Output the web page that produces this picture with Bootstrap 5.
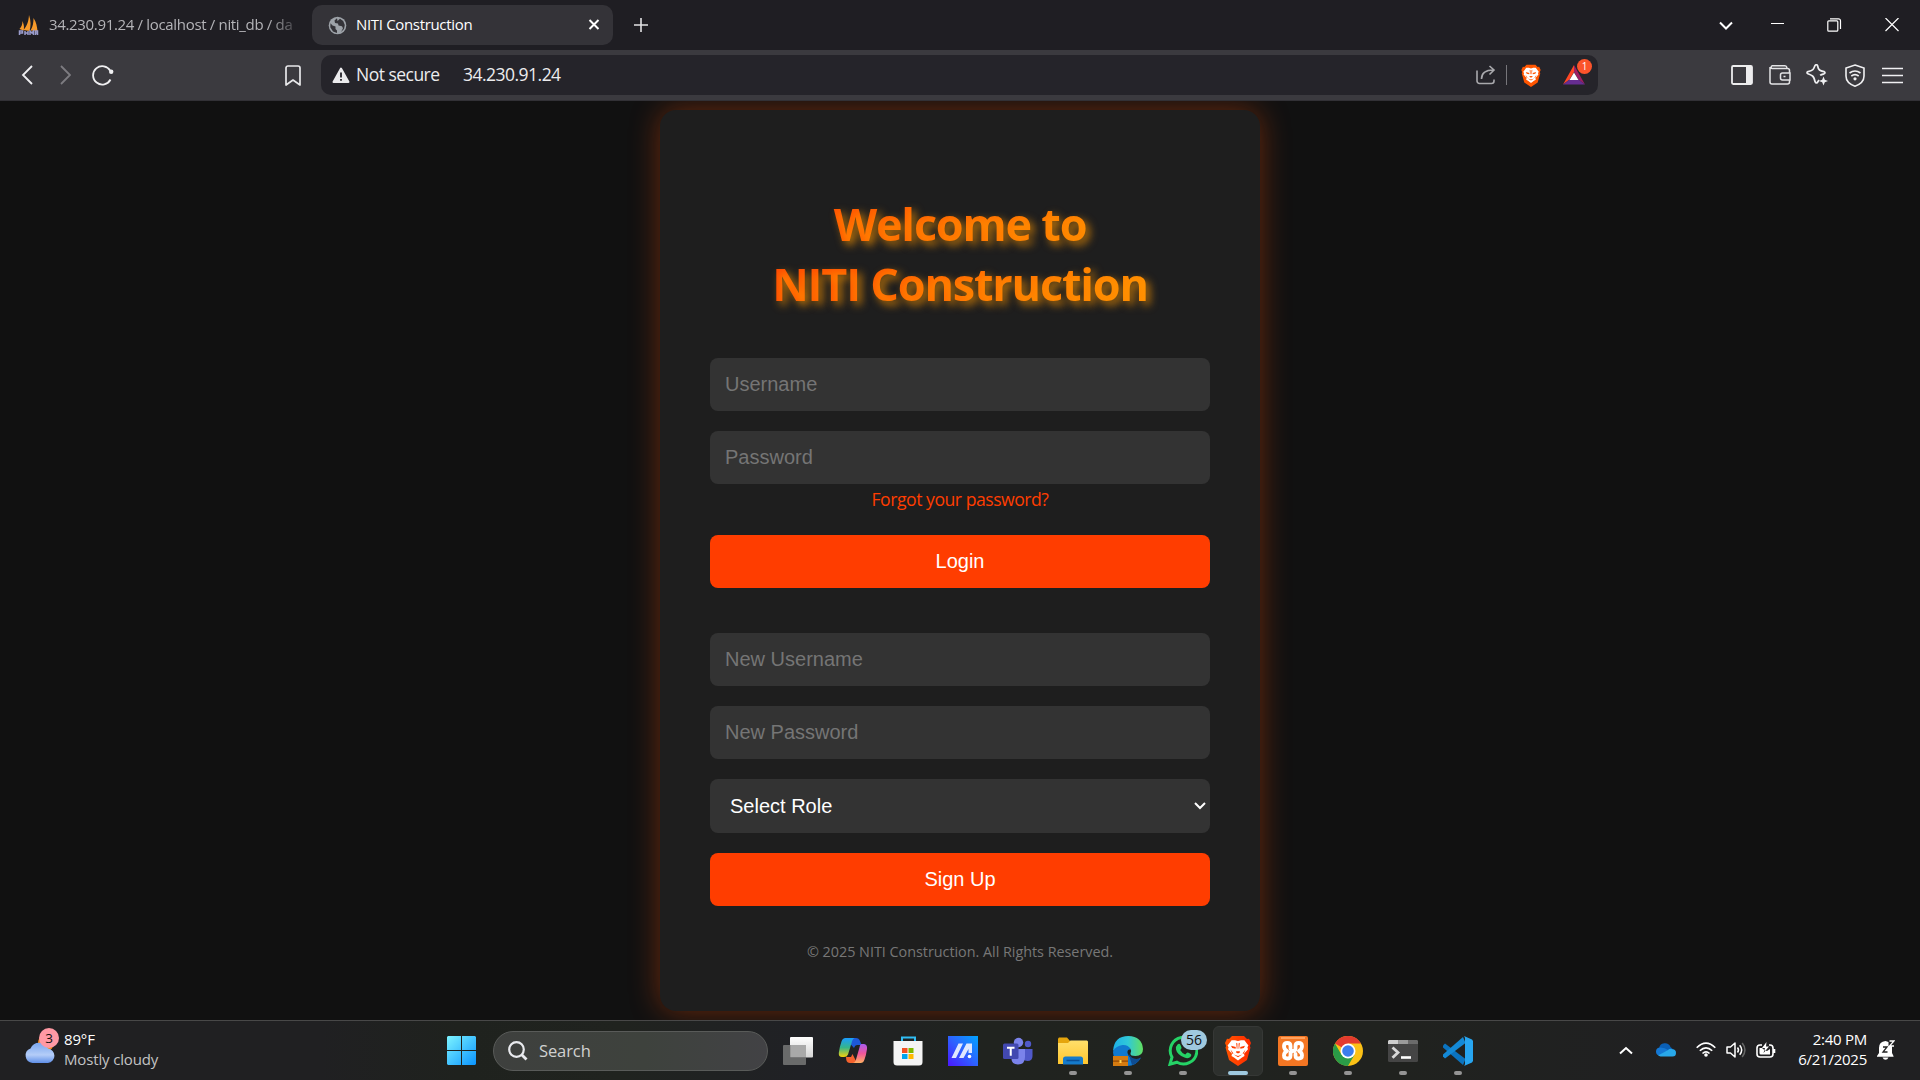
<!DOCTYPE html>
<html lang="en">
<head>
<meta charset="utf-8">
<title>NITI Construction</title>
<link rel="stylesheet" href="https://cdn.jsdelivr.net/npm/bootstrap@5.3.0/dist/css/bootstrap.min.css">
<style>
html,body{height:100%}
body{background:#111;color:#fff;font-family:"Open Sans","Noto Sans",sans-serif;overflow:hidden}
svg{display:block;flex:none}
.ui-text{white-space:nowrap;line-height:1}
.tabstrip{height:50px;background:#1f1e23}
.tab-old{width:312px;padding-left:18px}
.tab-title{font-size:15px;letter-spacing:-.33px;line-height:20px;padding-bottom:2px}
.tab-old .tab-title{width:244px;margin-left:10px;overflow:hidden;color:#b4b4b8;-webkit-mask-image:linear-gradient(90deg,#000 90%,rgba(0,0,0,.3));mask-image:linear-gradient(90deg,#000 90%,rgba(0,0,0,.3))}
.tab-current{width:301px;height:40px;margin-top:5px;border-radius:10px;background:#343338;padding:0 13px 0 16px}
.tab-current .tab-title{margin-left:9px}
.new-tab{padding-left:21px}
.win-btn{width:57px}
.win-list{width:46px}
.toolbar{height:51px;background:#3b3a3f;border-bottom:1px solid #323136}
.nav-part{width:321px;padding:0 20px 0 21px}
.address{width:1277px;height:40px;border-radius:10px;background:#25242a;padding:0 13px 0 11px}
.address-text{font-size:17.5px;color:#ececee;letter-spacing:-.52px}
.insecure{margin-left:6px;width:107px}
.addr-sep{width:1px;height:20px;background:#77767b;margin:0 14px 0 10px}
.reward{width:22px;height:20px;margin-left:22px}
.reward-count{left:14px;top:-6px;width:15px;height:15px;background:#fb542b;font-size:10px;line-height:15px}
.tool-right{padding-right:9px}
.tool-btn{width:37.5px}
.page-area{padding-top:9px;overflow:hidden}
.login-box{width:600px;height:901px;border-radius:16px;background:#1e1e1e;padding:84px 50px 0;box-shadow:0 0 30px rgba(255,80,0,.38)}
.welcome{font-size:45px;line-height:60px;font-weight:700;letter-spacing:-1.2px;margin-bottom:44px;background:linear-gradient(90deg,#ff3d00,#ff9800);-webkit-background-clip:text;background-clip:text;color:transparent;text-shadow:4px 4px 8px rgba(255,152,0,.7)}
.field,.field:focus{height:53px;border:0;border-radius:8px;background:#333;color:#fff;font:20px "Liberation Sans",Arial,sans-serif;padding:0 15px;margin-bottom:20px}
.field::placeholder{color:#757575;opacity:1}
.field.role{height:54px;padding:0 4px 0 20px}
.btn-fire{height:53px;border:0;border-radius:8px;background:#ff3d00;color:#fff;font:20px "Liberation Sans",Arial,sans-serif;padding:0}
.btn-fire:hover{background:#ff3d00;color:#fff}
.password{margin-bottom:3px}
.forgot{color:#ff3d00;font-size:17.6px;letter-spacing:-.47px;line-height:24px;margin-bottom:24px}
.signup{margin-top:45px}
.rights{color:#777;font-size:14.4px;letter-spacing:-.03px;line-height:20px;margin-top:36px}
.taskbar{height:60px;border-top:1px solid #484848;background:linear-gradient(90deg,#202022 0,#202022 320px,#1f221e 460px,#20231f 620px,#202125 800px,#20231f 980px,#20221f 1400px,#202022 1700px)}
.weather{width:436px;padding-left:24px}
.weather-art{width:32px;height:36px;margin-top:-10px}
.weather-count{left:15px;top:0;width:20px;height:20px;background:#ff99a4;color:#111;font-size:13.5px;line-height:20px}
.weather-text{font-size:15px;letter-spacing:-.15px;line-height:20px;margin:-4px 0 0 8px;color:#c3c3c4}
.task{width:50px;height:50px}
.task.current{border:1px solid #363836;border-radius:6px;background:#2d302d}
.task.running::after{content:"";position:absolute;left:21px;bottom:1px;width:8px;height:4px;border-radius:2px;background:#949494}
.task.current::after{left:14px;bottom:0;width:20px;background:#9fc9df}
.task-list{gap:5px}
.search{width:275px;height:40px;margin:0 5px 0 7px;border:1px solid #595b59;border-radius:20px;background:linear-gradient(90deg,#3e403e,#3e423d 55%,#424245);padding-left:14px;color:#d0d1d0;font-size:16.5px}
.search .ui-text{margin-left:11px;padding-top:1px;letter-spacing:-.1px}
.chat-count{left:23px;top:4px;width:26px;height:20px;background:#9fc9df;color:#111;font-size:14px;line-height:20px}
.tray{margin-left:auto;padding-right:25px}
.tray-wide{width:40px}
.tray-slim{width:30px}
.clock{width:80px;font-size:15px;letter-spacing:-.25px;line-height:20px;margin:-4px 10px 0 1px}
</style>
<script src="https://cdn.jsdelivr.net/npm/bootstrap@5.3.0/dist/js/bootstrap.bundle.min.js"></script>
</head>
<body class="d-flex flex-column">
<svg width="0" height="0" class="position-absolute"><defs>
<linearGradient id="flame" x1="0" x2="1"><stop stop-color="#ff5500"/><stop offset="1" stop-color="#ff2a00"/></linearGradient>
<symbol id="lion" viewBox="0 0 26 31"><path d="M7 1h12l3 3 2-.3L26 8l-1.200 3 .7 1.500-3.500 12.500L13 31l-9-6L.5 12.500 1.200 11 0 8l2-4.300 2 .3z"/><path fill="#fff" d="M13 6l3-.8h3.400l4 5.300-1 1.800.6 2-4 4.500.5 2.300-2.500 1.500-4 3-4-3-2.500-1.500.500-2.300-4-4.500.6-2-1-1.800 4-5.300H10z"/><path fill="currentColor" d="M6 10.800l4.800 1.300-.2 1.600-3.400-.6zM20 10.800l-4.800 1.300.2 1.600 3.400-.6zM10.800 17.200L13 18.500l2.200-1.300-.6-1h-3.200zM11.200 7.700l.6 6h.6V8.400zM14.800 7.700l-.6 6h-.6V8.400zM8.700 19.500L13 21l4.300-1.500L13 22.200zM5.500 14.500l3 4-1.300.2zM20.500 14.500l-3 4 1.300.2z"/></symbol>
</defs></svg>

<header class="tabstrip d-flex flex-shrink-0">
  <div class="tab-old d-flex align-items-center">
    <svg width="21" height="21" viewBox="0 0 21 21"><path fill="#f79a2a" d="M4.500 6C6 10 6.500 13 5.500 15.500L1.500 14C3.500 12 4.500 9 4.500 6zM11 0c2 6 2 11 .5 16L5.500 15C9.500 10.500 10.500 6 11 0zM15.500 3c3 4 3.500 9 4 13l-7-.5c2.500-4 3-8 3-12.500z"/><path fill="none" stroke="#9a9ccb" stroke-width="1.500" d="M1.500 20v-4h3v2h-3M7 20v-4m0 2h3m0-2v4M12 20v-4l2 2 1.500-2v4M17.500 20v-4h2v4m-2-2h2"/></svg>
    <span class="tab-title ui-text">34.230.91.24 / localhost / niti_db / da</span>
  </div>
  <div class="tab-current d-flex align-items-center">
    <svg width="19" height="19" viewBox="0 0 19 19"><circle cx="9.500" cy="9.500" r="8.800" fill="#9da2a8"/><path fill="#343338" d="M9 2.200L6.500 4.500 7 7l3 .5.5 2 3.500.7 1 2-2 3.800 3-3 .8-4-1.600-4L12 2.700 9.500 5zM2.500 7.200l-.2 4L5 15.500l4 1.500V14.500L7.500 13V10.500L4.500 9.500z"/></svg>
    <span class="tab-title ui-text me-auto">NITI Construction</span>
    <svg width="12" height="12" viewBox="0 0 12 12" stroke="#fff" stroke-width="2"><path d="M1.500 1l9 9m0-9l-9 9"/></svg>
  </div>
  <div class="new-tab d-flex align-items-center me-auto"><svg width="14" height="14" viewBox="0 0 14 14" stroke="#e2e2e4" stroke-width="1.600"><path d="M7 0v14M0 7h14"/></svg></div>
  <div class="win-list d-flex align-items-center justify-content-center"><svg width="14" height="9" viewBox="0 0 14 9" fill="none" stroke="#fff" stroke-width="2"><path d="M1 1.500l6 6 6-6"/></svg></div>
  <div class="win-btn d-flex align-items-center justify-content-center"><svg width="13" height="4" viewBox="0 0 13 4"><path stroke="#fff" d="M0 .5h13"/></svg></div>
  <div class="win-btn d-flex align-items-center justify-content-center"><svg width="15" height="14" viewBox="0 0 15 14" fill="none" stroke="#fff" stroke-width="1.200"><rect x=".8" y="2.800" width="10" height="10.400" rx="1"/><path d="M3 .8h8.500a2 2 0 0 1 2 2V11"/></svg></div>
  <div class="win-btn d-flex align-items-center justify-content-center"><svg width="14" height="14" viewBox="0 0 14 14" stroke="#fff" stroke-width="1.200"><path d="M.5 0l13 13m0-13l-13 13"/></svg></div>
</header>

<nav class="toolbar d-flex align-items-center flex-shrink-0">
  <div class="nav-part d-flex align-items-center">
    <svg width="12" height="20" viewBox="0 0 12 20" fill="none" stroke="#f0f0f2" stroke-width="1.800"><path d="M11 1L2 10l9 9"/></svg>
    <svg class="ms-4" width="14" height="20" viewBox="-3 0 14 20" fill="none" stroke="#7d7c81" stroke-width="1.800"><path d="M1 1l9 9-9 9"/></svg>
    <svg class="ms-3 me-auto" width="27" height="22" viewBox="-5 0 27 22" fill="none" stroke="#f0f0f2" stroke-width="1.800"><path d="M18.500 15.500A9.200 9.200 0 1 1 18.300 6.800"/><circle cx="19.200" cy="7.800" r="2.200" fill="#f0f0f2" stroke="none"/></svg>
    <svg width="16" height="21" viewBox="0 0 16 21" fill="none" stroke="#e8e8ea" stroke-width="1.700"><path stroke-linejoin="round" d="M1 20V3a2 2 0 0 1 2-2h10a2 2 0 0 1 2 2v17l-7-5z"/></svg>
  </div>
  <div class="address d-flex align-items-center">
    <svg width="18" height="16" viewBox="0 0 18 16"><path fill="#ebebed" stroke="#ebebed" stroke-width="2" stroke-linejoin="round" d="M9 1.500L16.500 15h-15z"/><path stroke="#25242a" stroke-width="1.800" d="M9 5.500v5M9 12v1.800"/></svg>
    <span class="address-text ui-text insecure">Not secure</span>
    <span class="address-text ui-text me-auto">34.230.91.24</span>
    <svg width="20" height="20" viewBox="0 0 20 20" fill="none" stroke="#a9a9ad" stroke-width="1.600"><path d="M1 5.500V16a2.500 2.500 0 0 0 2.500 2.500h12A2.500 2.500 0 0 0 18 16v-1.500M5.500 14c0-6 4-9 12-9M13.500 1l4.500 4-4.500 4.500"/></svg>
    <span class="addr-sep"></span>
    <svg width="20" height="23" fill="#ff5500" color="#ff5500"><use href="#lion"/></svg>
    <div class="reward position-relative">
      <svg width="22" height="20" viewBox="0 0 22 20"><path fill="#ff4724" d="M11 0v7L6.500 14.500 0 19.500z"/><path fill="#9e1f63" d="M11 0l11 19.500-6.500-5L11 7z"/><path fill="#662d91" d="M0 19.500l6.500-5h9l6.500 5z"/><path fill="#fff" d="M11 7.500l4.500 7.500h-9z"/></svg>
      <span class="reward-count position-absolute rounded-circle text-center">1</span>
    </div>
  </div>
  <div class="tool-right d-flex ms-auto">
    <div class="tool-btn d-flex align-items-center justify-content-center"><svg width="22" height="20" viewBox="0 0 22 20"><rect x="1" y="1" width="20" height="18" rx="1.200" fill="none" stroke="#ededee" stroke-width="1.800"/><path fill="#ededee" d="M15 1h6v18h-6z"/></svg></div>
    <div class="tool-btn d-flex align-items-center justify-content-center"><svg width="22" height="20" viewBox="0 0 22 20" fill="none" stroke="#e4e4e6" stroke-width="1.500"><path d="M20.500 8V5.500a2 2 0 0 0-2-2H3a1.500 1.500 0 0 1 0-2.700h13q1.500 0 2 2M1 2v15a2 2 0 0 0 2 2h15.500a2 2 0 0 0 2-2V15M21 8h-7.500q-2 0-2 2v3q0 2 2 2H21zM14.500 11.500h2"/></svg></div>
    <div class="tool-btn d-flex align-items-center justify-content-center"><svg width="22" height="22" viewBox="0 0 22 22" fill="none" stroke="#f0f0f2" stroke-width="1.700" stroke-linejoin="round"><path d="M13 16l-1 1.500q-1.500 3-3 0-1-4.500-2.500-5.500T2 9.800q-2-1.200 0-2.200 4-.7 5-2T9 1.500q1.500-1.500 2.500 0 .7 3.500 2 4.500t4.500 1.600q2 1.200 0 2.200-3 .7-3.800 1.500"/><path fill="#f0f0f2" stroke="none" d="M17.500 12.500l1.300 3.200 3.200 1.300-3.200 1.300-1.300 3.200-1.300-3.200L13 17l3.200-1.300z"/></svg></div>
    <div class="tool-btn d-flex align-items-center justify-content-center"><svg width="20" height="23" viewBox="0 0 20 23" fill="none" stroke="#f0f0f2" stroke-width="1.600"><path d="M10 1l9 3v8q0 7-9 10.200Q1 19 1 12V4z"/><path d="M4.500 9q5.500-4 11 0M6.300 12q3.700-2.700 7.400 0"/><circle cx="10" cy="14.800" r="1.600" fill="#f0f0f2" stroke="none"/></svg></div>
    <div class="tool-btn d-flex align-items-center justify-content-center"><svg width="21" height="17" viewBox="0 0 21 17"><path stroke="#f0f0f2" stroke-width="1.700" d="M0 1.500h21M0 8.500h21M0 15.500h21"/></svg></div>
  </div>
</nav>

<main class="page-area flex-grow-1 d-flex justify-content-center align-items-start">
  <div class="login-box text-center flex-shrink-0">
    <h1 class="welcome">Welcome to<br>NITI Construction</h1>
    <form>
      <input class="form-control field" placeholder="Username">
      <input class="form-control field password" type="password" placeholder="Password">
      <div class="forgot">Forgot your password?</div>
      <button type="button" class="btn btn-fire w-100 d-block">Login</button>
    </form>
    <form class="signup">
      <input class="form-control field" placeholder="New Username">
      <input class="form-control field" type="password" placeholder="New Password">
      <div class="field role d-flex align-items-center justify-content-between"><span>Select Role</span><svg width="12" height="8" viewBox="0 0 12 8" fill="none" stroke="#fff" stroke-width="2"><path d="M1 1l5 5 5-5"/></svg></div>
      <button type="button" class="btn btn-fire w-100 d-block">Sign Up</button>
    </form>
    <div class="rights">© 2025 NITI Construction. All Rights Reserved.</div>
  </div>
</main>

<footer class="taskbar d-flex align-items-center flex-shrink-0">
  <div class="weather d-flex align-items-center">
    <div class="weather-art position-relative">
      <svg width="32" height="36" viewBox="0 0 32 36"><defs><linearGradient id="cloud" x2="0" y2="1"><stop stop-color="#7ba6ee"/><stop offset=".6" stop-color="#b4cdf8"/><stop offset="1" stop-color="#5f8fe8"/></linearGradient></defs><circle cx="22" cy="15" r="8" fill="#f78a1c"/><path fill="url(#cloud)" d="M8.500 35a7.500 7.500 0 0 1-2-14.500A9.500 9.500 0 0 1 24 20.500 7.300 7.300 0 0 1 24 35z"/></svg>
      <span class="weather-count position-absolute rounded-circle text-center">3</span>
    </div>
    <div class="weather-text"><div class="text-white">89°F</div><div>Mostly cloudy</div></div>
  </div>
  <div class="task d-flex align-items-center justify-content-center"><svg width="30" height="30" viewBox="0 0 30 30"><defs><linearGradient id="win" x2="1" y2="1"><stop stop-color="#7df4ff"/><stop offset="1" stop-color="#0a94ff"/></linearGradient></defs><path fill="url(#win)" d="M2 0h13v14H1V1zM16 0h13l1 1v13H16zM1 15h14v14H2l-1-1zM16 15h14v13l-1 1H16z"/></svg></div>
  <div class="search d-flex align-items-center rounded-pill"><svg width="20" height="20" viewBox="0 0 20 20" fill="none" stroke="#e9eaee" stroke-width="2.200"><circle cx="8.500" cy="8.500" r="7.300"/><path stroke-width="2.800" d="M13.500 13.500l5 5"/></svg><span class="ui-text">Search</span></div>
  <div class="task-list d-flex">
    <div class="task d-flex align-items-center justify-content-center"><svg width="30" height="28" viewBox="0 0 30 28"><defs><linearGradient id="pane" x2="0" y2="1"><stop stop-color="#fff"/><stop offset="1" stop-color="#d5d5d5"/></linearGradient></defs><rect x="7" width="23" height="20.500" rx="1" fill="url(#pane)"/><rect y="8" width="23" height="20" rx="1" fill="#777" opacity=".85"/><path fill="#a9a9a9" d="M7.500 8H23v12H7.500z"/></svg></div>
    <div class="task d-flex align-items-center justify-content-center"><svg width="30" height="28" viewBox="0 0 30 28"><defs><linearGradient id="cpA" x2="0" y2="1"><stop stop-color="#1a9cff"/><stop offset=".5" stop-color="#35b58a"/><stop offset="1" stop-color="#f6d30c"/></linearGradient><linearGradient id="cpB" x2="0" y2="1"><stop stop-color="#a95cf0"/><stop offset=".5" stop-color="#f0569a"/><stop offset="1" stop-color="#ffb061"/></linearGradient></defs><path fill="#1d58d8" d="M7 1h11q3 0 4 3l1.500 4H19q-2 0-3 3z"/><path fill="#f4622e" d="M8 20h5l1.500-3L19 26h-7q-3 0-3.700-3z"/><path fill="url(#cpA)" d="M7.500 1H17q-2 0-3 3.500l-4 13Q9 20 6 20H4q-3.500 0-3.200-4Q1.500 10 3.500 4.500 4.500 1 7.500 1z"/><path fill="url(#cpB)" d="M23.500 7H26q3.500.5 3 5-.8 6-2.500 10.500-1 3.500-4 3.500h-8q2.500 0 3.500-3.500l3.500-12Q22 7 23.500 7z"/></svg></div>
    <div class="task d-flex align-items-center justify-content-center"><svg width="30" height="30" viewBox="0 0 30 30"><path fill="none" stroke="#30bdf3" stroke-width="2" d="M9 6V1.500h13V6"/><path fill="#f4f4f4" d="M.5 5h29v21q0 3.500-3.500 3.500H4Q.5 29.500.5 26z"/><path fill="#f25022" d="M9 12h5.500v5H9z"/><path fill="#7fba00" d="M15.500 12h5v5h-5z"/><path fill="#00a4ef" d="M9 18h5.500v5H9z"/><path fill="#ffb900" d="M15.500 18h5v5h-5z"/></svg></div>
    <div class="task d-flex align-items-center justify-content-center"><svg width="30" height="30" viewBox="0 0 30 30"><defs><linearGradient id="asus" x1="0" y1="1" x2="1" y2="0"><stop stop-color="#4b16ff"/><stop offset=".5" stop-color="#2d62ff"/><stop offset="1" stop-color="#00a5ff"/></linearGradient></defs><path fill="url(#asus)" d="M0 0h30v30H0z"/><path fill="#dfe8ff" d="M10.500 7.500H15L8 22H3.500zM18.500 7.500H24V17h-3.500v-4L15.500 22H11z"/><circle cx="21.500" cy="20.500" r="1.800" fill="#fff"/></svg></div>
    <div class="task d-flex align-items-center justify-content-center"><svg width="30" height="28" viewBox="0 0 30 28"><circle cx="15.500" cy="5.500" r="4.700" fill="#7b83eb"/><circle cx="25" cy="7" r="3.200" fill="#5059c9"/><path fill="#5059c9" d="M20 12h9.500v7q0 5-5 5-3 0-4.500-2z"/><path fill="#7b83eb" d="M8.500 12H22v8q0 7.500-7 7.500T8.500 21z"/><rect y="6.500" width="15.500" height="15.500" rx="1.500" fill="#4248b0"/><path stroke="#fff" stroke-width="2" d="M4 10.700h7.500M7.750 10.700v8"/></svg></div>
    <div class="task running position-relative d-flex align-items-center justify-content-center"><svg width="30" height="28" viewBox="0 0 30 28"><defs><linearGradient id="fold" x2="0" y2="1"><stop stop-color="#ffdf6b"/><stop offset="1" stop-color="#ffc62e"/></linearGradient></defs><path fill="#e5a50d" d="M1 0.500h8l3 3.500v5H0V1.500z"/><path fill="url(#fold)" d="M0 6h10l2.500-2.500H29l1 1V27H0z"/><path fill="#157bcb" d="M5 27.500V22q0-2.500 2.500-2.500h15q2.500 0 2.500 2.500v5.500z"/><path stroke="#0a4f97" stroke-width="1.500" d="M8.500 23.500h13"/></svg></div>
    <div class="task running position-relative d-flex align-items-center justify-content-center"><svg width="30" height="30" viewBox="0 0 30 30"><defs><linearGradient id="wave" x2="1"><stop stop-color="#1db0e8"/><stop offset=".5" stop-color="#30c8d8"/><stop offset="1" stop-color="#62e060"/></linearGradient></defs><path fill="#1179cf" d="M0 16Q2 8 10 8q7 0 7.500 5.500Q14 13 14.500 17q1.500 6 9 6 2.500 0 4.500-1.500Q23.500 30 14 30 1 29 0 16z"/><path fill="url(#wave)" d="M0 15Q1 0 15.500 0 29 0.500 30 13q0 7-7.500 7-5.500 0-5-2.500 1.500-2 0-4.500Q15 8.500 9.500 9 3 10 0 15z"/><path fill="#0e4d93" d="M15.500 17.500q3 5.500 8 5.500 2.500 0 4.500-1.500Q25 27.500 19 29z"/><path fill="#d57b10" d="M0 20h15v10H0z"/><path fill="#8f4605" d="M0 24.500h15v1.200H0z"/><path fill="#ffd34f" d="M6.500 24h2v3h-2z"/></svg></div>
    <div class="task running position-relative d-flex align-items-center justify-content-center"><svg width="30" height="30" viewBox="0 0 30 30"><path fill="none" stroke="#25d366" stroke-width="3" d="M2 28.200l2-7A13.300 13.300 0 1 1 9 26.200z"/><path fill="#25d366" d="M9.500 8.500q2-1.500 3 .5l1 2.500q.2 1-1.300 2.500 2 3.500 5 4.500l1.800-1.700q.8-.5 1.500 0l2.300 1.200q1.200.8 0 2.500-2.300 2.700-6.300 1Q9 18.500 8 13.500q-.3-3.500 1.500-5z"/></svg><span class="chat-count position-absolute rounded-pill text-center">56</span></div>
    <div class="task running current position-relative d-flex align-items-center justify-content-center"><svg width="26" height="31" fill="url(#flame)" color="#ff3d00"><use href="#lion"/></svg></div>
    <div class="task running position-relative d-flex align-items-center justify-content-center"><svg width="30" height="30" viewBox="0 0 30 30"><rect width="30" height="30" rx="2" fill="#f37623"/><path fill="#ffa25e" d="M3 1h24v2H3z"/><path fill="none" stroke="#fff" stroke-width="3.800" stroke-linejoin="round" stroke-linecap="round" d="M12.500 12.500V10q0-3-3.200-3T6 10q0 3.500 3 5-3 1.500-3 4.500T9.300 22.500t3.200-3V17.500q0-2.500 2.500-2.500t2.500-2.500V10q0-3 3.200-3T24 10q0 3.500-3 5 3 1.500 3 4.500t-3.300 3-3.200-3V18"/></svg></div>
    <div class="task running position-relative d-flex align-items-center justify-content-center"><svg width="30" height="30" viewBox="0 0 30 30"><circle cx="15" cy="15" r="15" fill="#fbc116"/><path fill="#e33b2e" d="M15 15L2 7.500A15 15 0 0 1 28 7.500H15z"/><path fill="#2a9b47" d="M2 7.500A15 15 0 0 0 15 30l6.500-11.200L15 15 8.500 18.800z"/><circle cx="15" cy="15" r="7.500" fill="#fff"/><circle cx="15" cy="15" r="5.800" fill="#3b7ded"/></svg></div>
    <div class="task running position-relative d-flex align-items-center justify-content-center"><svg width="30" height="22" viewBox="0 0 30 22"><rect width="30" height="22" rx="1.500" fill="#454545"/><path fill="#cfcfcf" d="M1 0h9.500v4H0V1z"/><path fill="#9b9b9b" d="M10.500 0H20v4h-9.500z"/><path fill="#6b6b6b" d="M20 0h9l1 1v3H20z"/><path fill="none" stroke="#d8d8d8" stroke-width="2.800" d="M4.500 7.500l5.500 5-5.500 5.300"/><path stroke="#fff" stroke-width="2.600" d="M13 17.500h10"/></svg></div>
    <div class="task running position-relative d-flex align-items-center justify-content-center"><svg width="30" height="30" viewBox="0 0 30 30"><path fill="#0b73bf" d="M2 7.500L0 9.500v2L20 29l2.500-6z"/><path fill="#1489d6" d="M2 22.500l-2-2v-2L20 1l2.500 6z"/><path fill="#27a5f0" d="M21 0l8 3.500 1 1.500v20l-1 1.500L21 30q1-1 1-2.500v-25Q22 1 21 0z"/></svg></div>
  </div>
  <div class="tray d-flex align-items-center">
    <div class="tray-wide d-flex justify-content-center"><svg width="14" height="10" viewBox="0 0 14 10" fill="none" stroke="#fff" stroke-width="2"><path d="M1 7.500L7 2l6 5.500"/></svg></div>
    <div class="tray-wide d-flex justify-content-center"><svg width="20" height="16" viewBox="0 0 20 16"><path fill="#0a5fb5" d="M3 5.500A6 6 0 0 1 14.500 4L20 9l-7 3z"/><path fill="#1478d4" d="M4.500 4.500Q9 4.500 12 7L4 12.500Q0 12.500 0 8.500t4.500-4z"/><path fill="#28a8ea" d="M2 12.500L12 7q2-2 4.500-.8Q20 6.500 20 10q0 3.500-3.500 3.500h-12z"/></svg></div>
    <div class="tray-wide d-flex justify-content-center"><svg width="20" height="17" viewBox="0 0 20 17" fill="none" stroke="#fff" stroke-width="1.600"><path d="M.7 5.800Q10-3.500 19.300 5.800M3.800 8.800q6.200-6 12.400 0M6.500 11.500q3.500-3.300 7 0"/><circle cx="10" cy="13" r="1.800" fill="#fff" stroke="none"/></svg></div>
    <div class="tray-slim"><svg width="21" height="20" viewBox="0 0 21 20" fill="none" stroke="#fff" stroke-width="1.500"><path stroke-linejoin="round" d="M1 6h3.500L9 2v14l-4.500-4H1z"/><path d="M11.500 6.500q2 2.500 0 5M13.700 4.300q4 4.700 0 9.400"/><path stroke="#666" d="M16.200 2q5.500 7 0 14"/></svg></div>
    <div class="tray-slim"><svg width="20" height="20" viewBox="0 0 20 20" fill="none" stroke="#fff" stroke-width="1.600"><path d="M6 4H4Q1 4 1 7v6q0 3 3 3h10q3 0 3-3V7q0-3-3-3h-1M18.500 8v4"/><path fill="#fff" stroke="none" d="M3.500 7H6q2 2.500 5 3l3-2v5.500H5q-1.500 0-1.500-1.500zM10.500 1L6 7h3l-1.500 5L13 5.500h-3z"/></svg></div>
    <div class="clock text-end"><div>2:40 PM</div><div>6/21/2025</div></div>
    <svg width="18" height="21" viewBox="0 0 18 21"><path fill="#fff" d="M2 8q0-6.500 6.500-7l3 1v4h3.500v7l1.500 3v.700H0V16l2-3zM5.500 17.500h6q-1 2.300-3 2.300t-3-2.300z"/><path fill="none" stroke="#222" stroke-width="1.300" d="M6 7h4l-4 5h4.500"/><path fill="none" stroke="#fff" stroke-width="1.300" d="M12.500 1h4.500l-4.500 5H17"/></svg>
  </div>
</footer>
</body>
</html>
